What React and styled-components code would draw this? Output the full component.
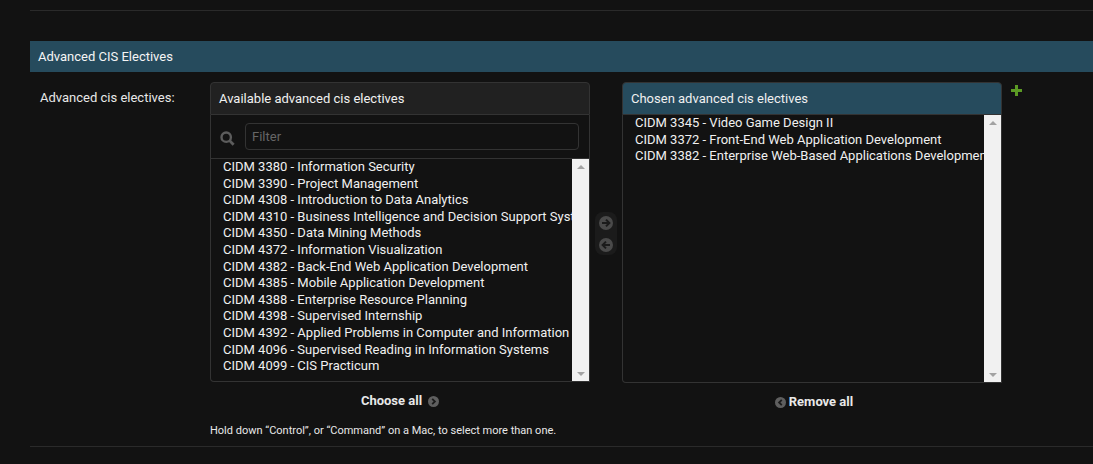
import React from "react";
import styled, { createGlobalStyle } from "styled-components";

const Global = createGlobalStyle`
  html, body { margin: 0; padding: 0; background: #121212; }
  body { font-family: Roboto, "Liberation Sans", sans-serif; font-size: 13px; color: #eeeeee; overflow: hidden; }
  * { box-sizing: border-box; }
`;

const Page = styled.div`
  width: 1093px;
  height: 464px;
  padding: 10px 0 0 30px;
`;
const Fieldset = styled.div`
  border-top: 1px solid #2a2a2a;
  padding-top: 30px;
`;
const SectionHeader = styled.h2`
  margin: 0;
  height: 31px;
  background: #264b5d;
  color: #f5f5f5;
  font-size: 13px;
  font-weight: 400;
  line-height: 31px;
  padding-left: 8px;
`;
const FormRow = styled.div`
  display: flex;
  padding: 10px 0 0 10px;
  height: 375px;
  border-bottom: 1px solid #2a2a2a;
`;
const Label = styled.label`
  width: 170px;
  flex: none;
  padding-top: 8px;
  line-height: 16px;
  color: #e8e8e8;
`;
const Field = styled.div`
  display: flex;
  flex-direction: column;
`;
const Widgets = styled.div`
  display: flex;
  align-items: flex-start;
`;
const Selector = styled.div`
  width: 380px;
  display: flex;
  flex-direction: column;
`;
const Title = styled.div`
  height: 33px;
  padding-left: 8px;
  line-height: 31px;
  font-size: 13px;
  border: 1px solid #333;
  border-radius: 4px 4px 0 0;
  color: #f0f0f0;
  background: ${(p) => (p.$chosen ? "#264b5d" : "#212121")};
`;
const FilterRow = styled.div`
  height: 44px;
  display: flex;
  align-items: center;
  padding: 0 10px 0 9px;
  gap: 10px;
  border-left: 1px solid #333;
  border-right: 1px solid #333;
  border-bottom: 1px solid #333;
`;
const FilterBox = styled.div`
  flex: 1;
  height: 27px;
  border: 1px solid #333;
  border-radius: 4px;
  color: #666;
  line-height: 25px;
  padding-left: 6px;
  font-size: 13px;
`;
const ListBox = styled.div`
  height: ${(p) => p.$h}px;
  display: flex;
  border: 1px solid #333;
  border-top: none;
  border-radius: 0 0 0 4px;
`;
const Items = styled.div`
  flex: 1;
  min-width: 0;
  overflow: hidden;
  padding-left: 12px;
`;
const Item = styled.div`
  height: 16.6px;
  line-height: 16.6px;
  white-space: nowrap;
  font-size: 13px;
  color: #f0f0f0;
`;
const Scrollbar = styled.div`
  width: 17px;
  flex: none;
  background: #f1f1f1;
  display: flex;
  flex-direction: column;
  justify-content: space-between;
  align-items: center;
  padding: 6px 0 5px;
`;
const ArrowUp = styled.span`
  width: 0;
  height: 0;
  border-left: 4px solid transparent;
  border-right: 4px solid transparent;
  border-bottom: 4px solid #a3a3a3;
`;
const ArrowDown = styled.span`
  width: 0;
  height: 0;
  border-left: 4px solid transparent;
  border-right: 4px solid transparent;
  border-top: 4px solid #a3a3a3;
`;
const Chooser = styled.div`
  width: 22px;
  height: 43px;
  margin: 130px 5px 0 5px;
  flex: none;
  background: #1b1b1b;
  border-radius: 8px;
  display: flex;
  flex-direction: column;
  align-items: center;
  justify-content: center;
  gap: 8px;
`;
const AllLink = styled.div`
  display: flex;
  align-items: center;
  justify-content: center;
  gap: ${(p) => p.$gap}px;
  font-weight: 700;
  font-size: 13px;
  color: #e8e8e8;
  height: 16px;
  margin-top: 10px;
  padding-left: ${(p) => p.$pl || 0}px;
`;
const Help = styled.div`
  margin-top: 15px;
  font-size: 11px;
  line-height: 14px;
  color: #e8e8e8;
`;
const PlusWrap = styled.div`
  margin: 3px 0 0 9px;
  line-height: 0;
`;
const ChevronSvg = styled.svg`
  flex: none;
  margin-top: 3px;
`;
const SearchSvg = styled.svg`
  flex: none;
  margin-top: 4px;
`;

const Arrow = ({ dir, size = 14 }) => (
  <svg width={size} height={size} viewBox="0 0 14 14">
    <circle cx="7" cy="7" r="7" fill="#4a4a4a" />
    <path
      d={dir === "right" ? "M3 7h7M7 3.6 10.4 7 7 10.4" : "M11 7H4M7 3.6 3.6 7 7 10.4"}
      stroke="#1b1b1b"
      strokeWidth="2"
      fill="none"
    />
  </svg>
);
const Chevron = ({ dir }) => (
  <ChevronSvg width="11" height="11" viewBox="0 0 11 11">
    <circle cx="5.5" cy="5.5" r="5.5" fill="#5f5f5f" />
    <path
      d={dir === "right" ? "M4.2 2.8 6.9 5.5 4.2 8.2" : "M6.8 2.8 4.1 5.5 6.8 8.2"}
      stroke="#1b1b1b"
      strokeWidth="1.8"
      fill="none"
    />
  </ChevronSvg>
);
const Search = () => (
  <SearchSvg width="15" height="15" viewBox="0 0 15 15">
    <circle cx="6.2" cy="6.2" r="4.7" stroke="#5c5c5c" strokeWidth="2.4" fill="none" />
    <path d="M9.6 9.6 13.6 13.8" stroke="#5c5c5c" strokeWidth="2.8" />
  </SearchSvg>
);
const Plus = () => (
  <svg width="11" height="11" viewBox="0 0 11 11">
    <path d="M4 0h3v4h4v3H7v4H4V7H0V4h4z" fill="#5b9a24" />
  </svg>
);

const available = [
  "CIDM 3380 - Information Security",
  "CIDM 3390 - Project Management",
  "CIDM 4308 - Introduction to Data Analytics",
  "CIDM 4310 - Business Intelligence and Decision Support Systems",
  "CIDM 4350 - Data Mining Methods",
  "CIDM 4372 - Information Visualization",
  "CIDM 4382 - Back-End Web Application Development",
  "CIDM 4385 - Mobile Application Development",
  "CIDM 4388 - Enterprise Resource Planning",
  "CIDM 4398 - Supervised Internship",
  "CIDM 4392 - Applied Problems in Computer and Information Systems",
  "CIDM 4096 - Supervised Reading in Information Systems",
  "CIDM 4099 - CIS Practicum",
];
const chosen = [
  "CIDM 3345 - Video Game Design II",
  "CIDM 3372 - Front-End Web Application Development",
  "CIDM 3382 - Enterprise Web-Based Applications Development",
];

export default function App() {
  return (
    <Page>
      <Global />
      <Fieldset>
        <SectionHeader>Advanced CIS Electives</SectionHeader>
        <FormRow>
          <Label>Advanced cis electives:</Label>
          <Field>
            <Widgets>
              <Selector>
                <Title>Available advanced cis electives</Title>
                <FilterRow>
                  <Search />
                  <FilterBox>Filter</FilterBox>
                </FilterRow>
                <ListBox $h={223}>
                  <Items>
                    {available.map((t) => (
                      <Item key={t}>{t}</Item>
                    ))}
                  </Items>
                  <Scrollbar>
                    <ArrowUp />
                    <ArrowDown />
                  </Scrollbar>
                </ListBox>
                <AllLink $gap={6}>
                  Choose all <Chevron dir="right" />
                </AllLink>
              </Selector>
              <Chooser>
                <Arrow dir="right" />
                <Arrow dir="left" />
              </Chooser>
              <Selector>
                <Title $chosen>Chosen advanced cis electives</Title>
                <ListBox $h={268}>
                  <Items>
                    {chosen.map((t) => (
                      <Item key={t}>{t}</Item>
                    ))}
                  </Items>
                  <Scrollbar>
                    <ArrowUp />
                    <ArrowDown />
                  </Scrollbar>
                </ListBox>
                <AllLink $gap={3} $pl={4}>
                  <Chevron dir="left" /> Remove all
                </AllLink>
              </Selector>
              <PlusWrap>
                <Plus />
              </PlusWrap>
            </Widgets>
            <Help>Hold down “Control”, or “Command” on a Mac, to select more than one.</Help>
          </Field>
        </FormRow>
      </Fieldset>
    </Page>
  );
}
